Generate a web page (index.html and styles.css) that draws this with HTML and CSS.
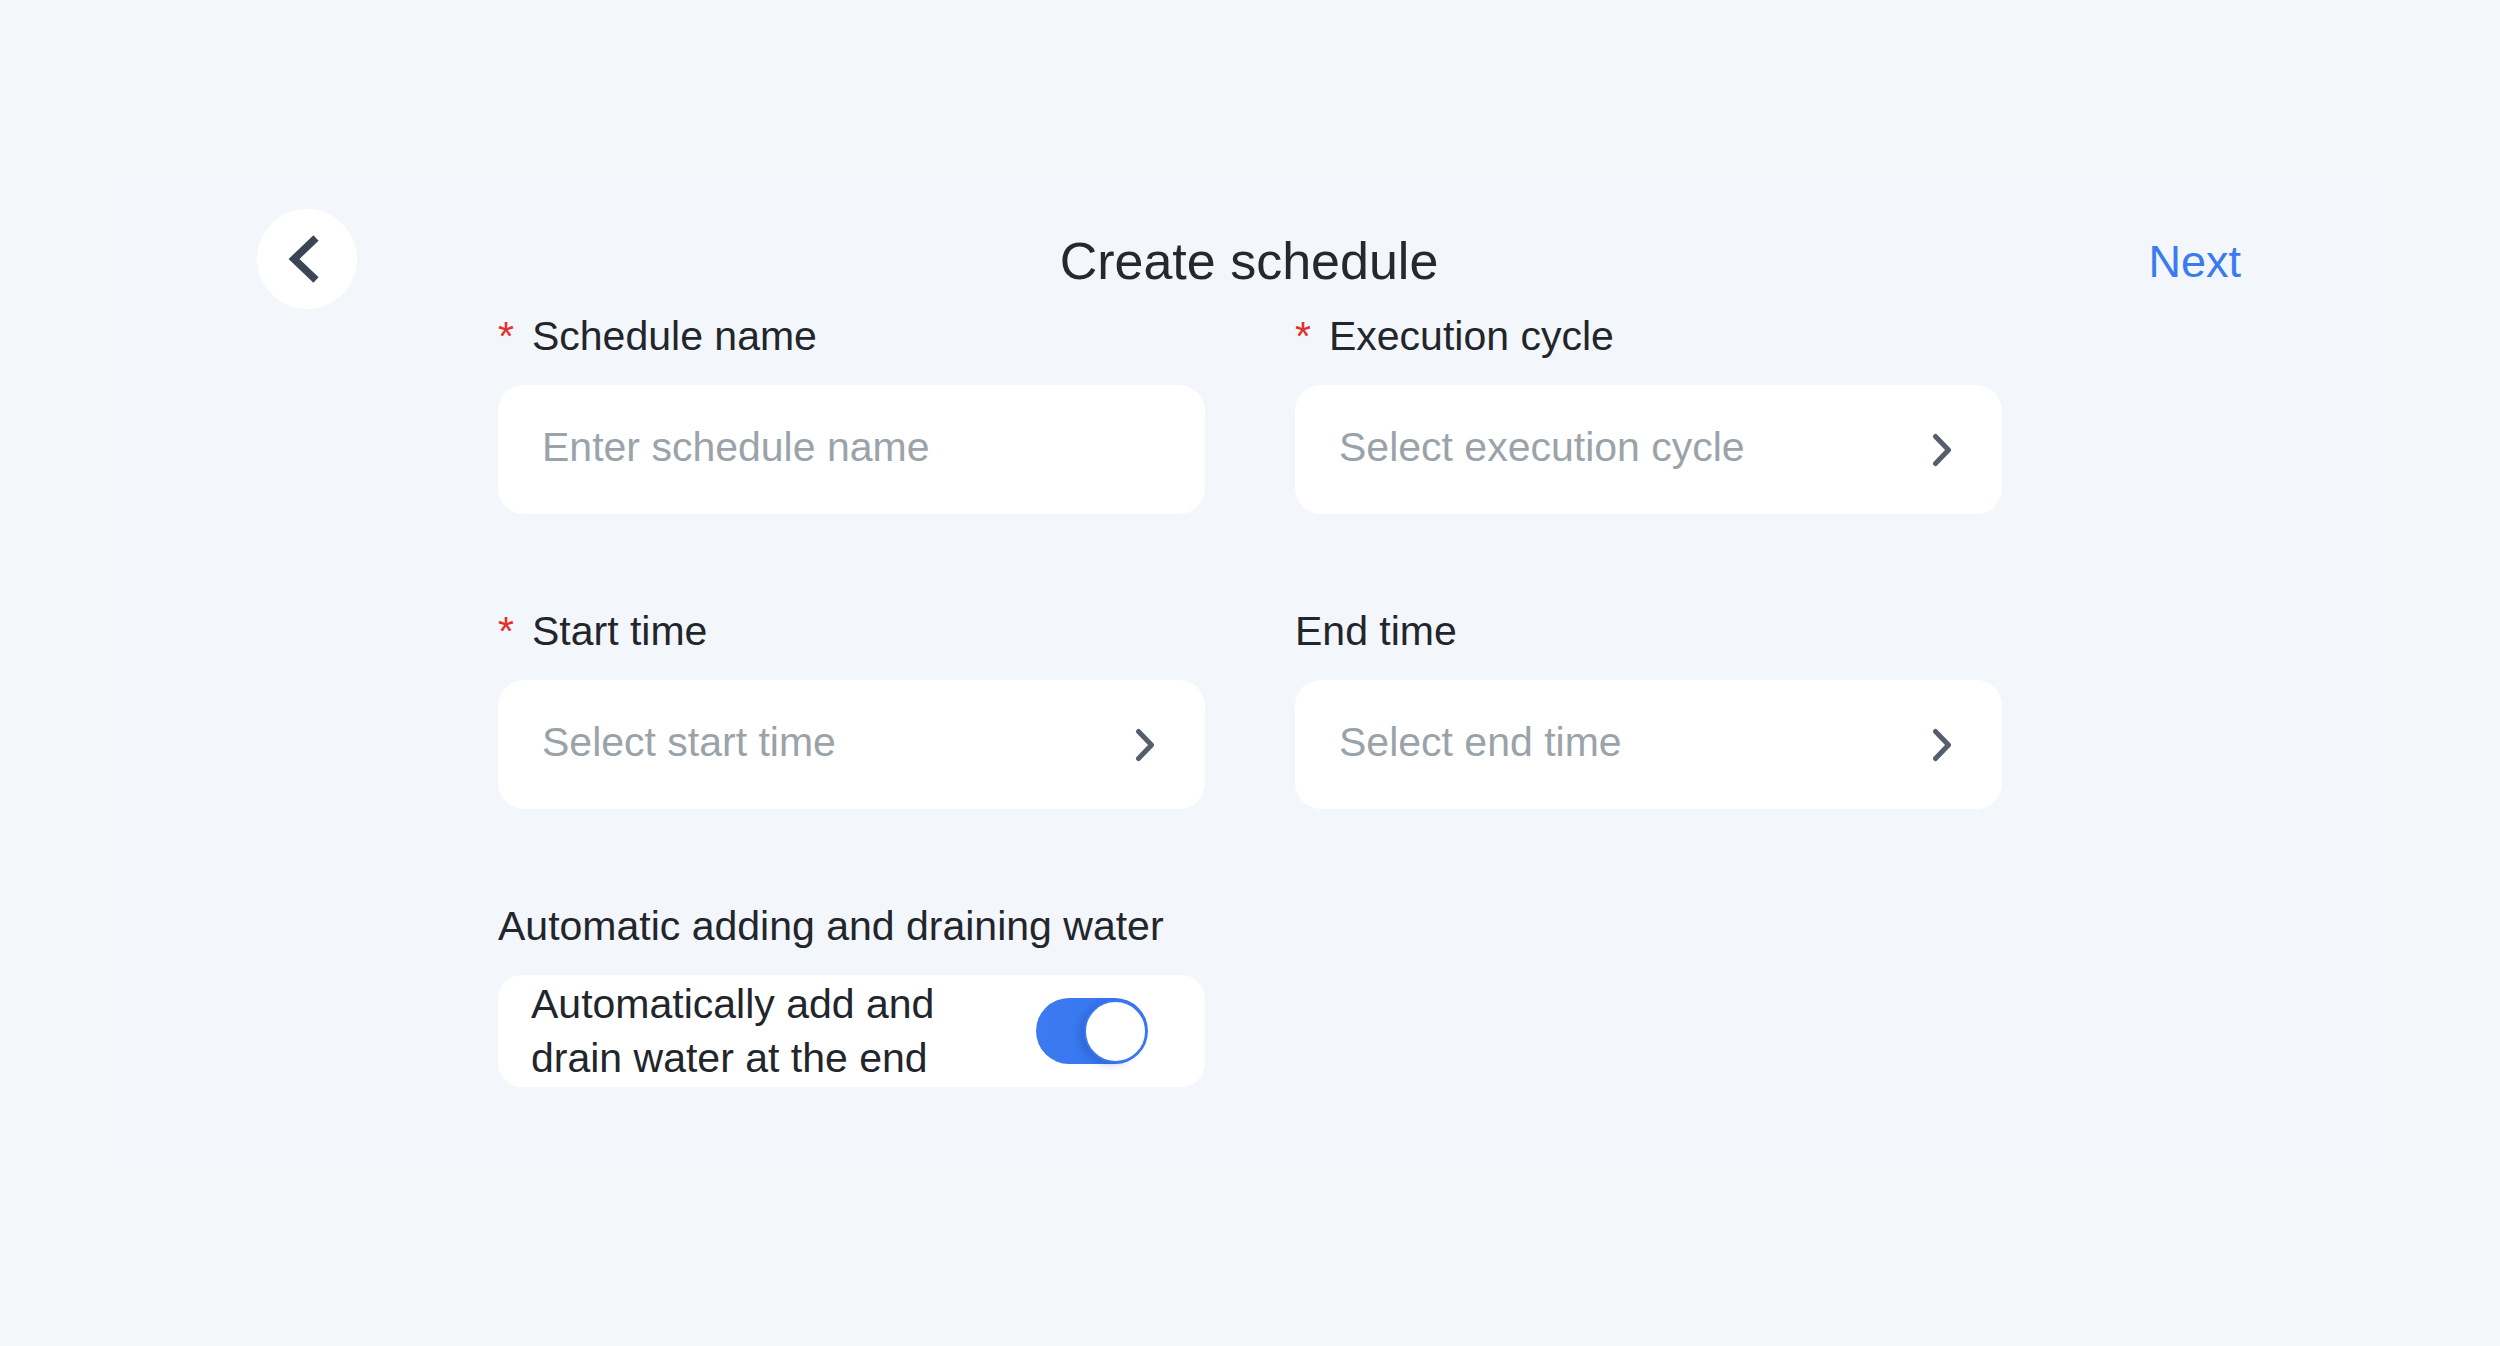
FILE: index.html
```html
<!DOCTYPE html>
<html lang="en">
<head>
<meta charset="utf-8">
<title>Create schedule</title>
<link rel="stylesheet" href="styles.css">
</head>
<body>
<div class="panel">
  <header class="header">
    <button class="back" aria-label="Back">
      <svg width="100" height="100" viewBox="0 0 100 100"><polyline points="59,29 37,50 59,71" fill="none" stroke="#3b4555" stroke-width="7.5" stroke-linejoin="miter"/></svg>
    </button>
    <h1 class="title">Create schedule</h1>
    <a class="next">Next</a>
  </header>

  <form class="form">
    <div class="field">
      <div class="label"><span class="req">*</span>Schedule name</div>
      <div class="input"><span class="placeholder">Enter schedule name</span></div>
    </div>
    <div class="field">
      <div class="label"><span class="req">*</span>Execution cycle</div>
      <div class="input"><span class="placeholder">Select execution cycle</span>
        <svg class="chev" width="20" height="34" viewBox="0 0 20 34"><polyline points="3.5,3.5 16.5,17 3.5,30.5" fill="none" stroke="#555e6b" stroke-width="5" stroke-linecap="round" stroke-linejoin="round"/></svg>
      </div>
    </div>
    <div class="field">
      <div class="label"><span class="req">*</span>Start time</div>
      <div class="input"><span class="placeholder">Select start time</span>
        <svg class="chev" width="20" height="34" viewBox="0 0 20 34"><polyline points="3.5,3.5 16.5,17 3.5,30.5" fill="none" stroke="#555e6b" stroke-width="5" stroke-linecap="round" stroke-linejoin="round"/></svg>
      </div>
    </div>
    <div class="field">
      <div class="label">End time</div>
      <div class="input"><span class="placeholder">Select end time</span>
        <svg class="chev" width="20" height="34" viewBox="0 0 20 34"><polyline points="3.5,3.5 16.5,17 3.5,30.5" fill="none" stroke="#555e6b" stroke-width="5" stroke-linecap="round" stroke-linejoin="round"/></svg>
      </div>
    </div>
    <div class="field">
      <div class="label">Automatic adding and draining water</div>
      <div class="card">
        <div class="card-text">Automatically add and drain water at the end</div>
        <div class="toggle"><div class="knob"></div></div>
      </div>
    </div>
  </form>
</div>
</body>
</html>
```

FILE: styles.css
```css
* { box-sizing: border-box; }

html, body {
  margin: 0;
  padding: 0;
}

body {
  width: 2500px;
  height: 1346px;
  background: #f4f7fa;
  font-family: "Liberation Sans", Arial, sans-serif;
  color: #22262c;
  padding-top: 170px;
  overflow: hidden;
}

.panel {
  margin: 0 113px;
  background: #f3f6fb;
  padding: 39px 0 85px 0;
}

.header {
  display: grid;
  grid-template-columns: 1fr auto 1fr;
  align-items: center;
  height: 100px;
  padding: 0 146px 0 144px;
}

.back {
  width: 100px;
  height: 100px;
  border-radius: 50%;
  background: #ffffff;
  border: none;
  padding: 0;
  display: flex;
  align-items: center;
  justify-content: center;
  justify-self: start;
}

.back svg { display: block; }

.title {
  margin: 3px 0 0 0;
  font-size: 52px;
  font-weight: normal;
  line-height: 60px;
  color: #25282d;
}

.next {
  justify-self: end;
  margin-top: 5px;
  font-size: 45px;
  line-height: 56px;
  color: #3a7bf1;
}

.form {
  margin: 3px 0 0 385px;
  display: grid;
  grid-template-columns: 707px 707px;
  column-gap: 90px;
  row-gap: 93px;
}

.label {
  font-size: 41px;
  line-height: 48px;
  margin-bottom: 25px;
  color: #22262c;
  white-space: nowrap;
}

.req {
  color: #e2312c;
  margin-right: 18px;
}

.input {
  height: 129px;
  background: #ffffff;
  border-radius: 26px;
  display: flex;
  align-items: center;
  justify-content: space-between;
  padding: 0 50px 0 44px;
}

.placeholder {
  font-size: 41px;
  line-height: 48px;
  color: #9ba3aa;
  margin-bottom: 6px;
}

.chev { display: block; }

.card {
  height: 112px;
  background: #ffffff;
  border-radius: 24px;
  display: flex;
  align-items: center;
  justify-content: space-between;
  padding: 0 57px 0 33px;
}

.card-text {
  width: 460px;
  font-size: 41px;
  line-height: 54px;
  color: #22262c;
}

.toggle {
  width: 112px;
  height: 66px;
  border-radius: 33px;
  background: linear-gradient(90deg, #3b7af0 0%, #3775ee 100%);
  display: flex;
  align-items: center;
  justify-content: flex-end;
  padding-right: 1px;
}

.knob {
  width: 63px;
  height: 63px;
  border-radius: 50%;
  background: #ffffff;
  border: 2px solid #3a78f0;
  box-shadow: -5px 2px 6px rgba(20, 60, 160, 0.25);
}
```
